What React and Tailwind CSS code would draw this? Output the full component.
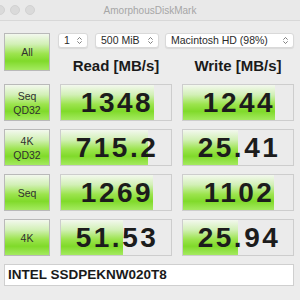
import { ChevronsUpDown } from "lucide-react";

const GREEN =
  "bg-[linear-gradient(to_bottom,#f3f8ee_0%,#d2f0b6_28%,#9ce44e_55%,#80da2a_75%,#a4ea60_100%)]";

const rows = [
  { label: ["Seq", "QD32"], read: "1348", readW: 93, write: "1244", writeW: 92 },
  { label: ["4K", "QD32"], read: "715.2", readW: 87, write: "25.41", writeW: 55 },
  { label: ["Seq"], read: "1269", readW: 92, write: "1102", writeW: 91 },
  { label: ["4K"], read: "51.53", readW: 62, write: "25.94", writeW: 55 },
];

const Select = ({ label, className }) => (
  <div
    className={`h-[15px] bg-white rounded-[3px] border border-[#d9d9d9] shadow-[0_1px_1px_rgba(0,0,0,0.08)] flex items-center justify-between pl-[5px] pr-[3px] text-[10.5px] text-[#2a2a2a] ${className}`}
  >
    <span className="leading-none">{label}</span>
    <ChevronsUpDown size={9} strokeWidth={2} className="text-[#555]" />
  </div>
);

const LabelButton = ({ lines, className = "" }) => (
  <div
    className={`w-[46px] border border-[#b9b9b9] ${GREEN} flex flex-col items-center justify-center text-[10.5px] leading-[14px] text-[#303030] ${className}`}
  >
    {lines.map((l) => (
      <span key={l}>{l}</span>
    ))}
  </div>
);

const Cell = ({ value, width }) => (
  <div className="relative w-[112px] h-full border border-[#cdcdcd] bg-[#ebebeb] overflow-hidden">
    <div className={`absolute left-0 top-0 bottom-0 ${GREEN}`} style={{ width }} />
    <div className="relative h-full flex items-center justify-center text-[28px] font-bold tracking-[2.5px] text-[#1c1c1c] pl-[2px]">
      {value}
    </div>
  </div>
);

export default function App() {
  return (
    <div
      className="w-[300px] h-[300px] bg-[#ececec] overflow-hidden"
      style={{ fontFamily: '"Liberation Sans", Arial, sans-serif' }}
    >
      {/* Title bar */}
      <div className="relative h-[21px] border-b border-[#d8d8d8] bg-[#e9e9e9] flex items-center justify-center">
        <div className="absolute left-[-5px] top-[5px] flex gap-[5px]">
          <div className="w-[10px] h-[10px] rounded-full bg-[#dadada] border border-[#d2d2d2]" />
          <div className="w-[10px] h-[10px] rounded-full bg-[#dadada] border border-[#d2d2d2]" />
          <div className="w-[10px] h-[10px] rounded-full bg-[#dadada] border border-[#d2d2d2]" />
        </div>
        <span className="text-[10px] text-[#a6a6a6] pl-[-4px]">AmorphousDiskMark</span>
      </div>

      <div className="pl-[4px] pt-[12px]">
        {/* Top section */}
        <div className="flex">
          <LabelButton lines={["All"]} className="h-[38px]" />
          <div className="flex flex-col">
            <div className="flex">
              <Select label="1" className="ml-[8px] w-[30px]" />
              <Select label="500 MiB" className="ml-[7px] w-[64px]" />
              <Select label="Macintosh HD (98%)" className="ml-[6px] w-[129px]" />
            </div>
            <div className="flex mt-[9px] text-[15px] font-bold text-[#1a1a1a] leading-[18px]">
              <div className="ml-[10px] w-[112px] text-center">Read [MB/s]</div>
              <div className="ml-[10px] w-[112px] text-center">Write [MB/s]</div>
            </div>
          </div>
        </div>

        {/* Result rows */}
        <div className="flex flex-col gap-[8px] mt-[9px]">
          {rows.map((r) => (
            <div key={r.label.join("-")} className="flex h-[37px] gap-[10px]">
              <LabelButton lines={r.label} className="h-full" />
              <Cell value={r.read} width={r.readW} />
              <Cell value={r.write} width={r.writeW} />
            </div>
          ))}
        </div>

        {/* Drive name */}
        <div className="mt-[8px] w-[290px] h-[22px] bg-white border border-[#cfcfcf] flex items-center pl-[3px] text-[13.5px] font-bold text-[#1a1a1a]">
          INTEL SSDPEKNW020T8
        </div>
      </div>
    </div>
  );
}
